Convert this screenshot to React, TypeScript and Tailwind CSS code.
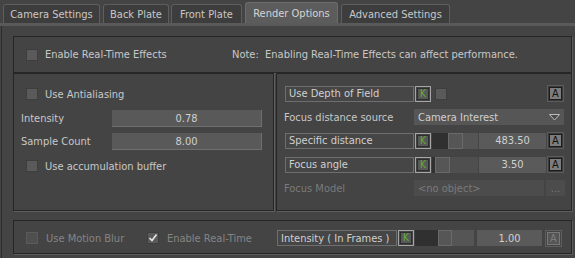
import React from 'react';

const TABS = [
  { label: 'Camera Settings', w: 'w-[97px]', ml: 'ml-[3px]' },
  { label: 'Back Plate', w: 'w-[66px]', ml: 'ml-[3px]' },
  { label: 'Front Plate', w: 'w-[71px]', ml: 'ml-[2px]' },
  { label: 'Render Options', w: 'w-[93px]', ml: 'ml-[3px]', active: true },
  { label: 'Advanced Settings', w: 'w-[109px]', ml: 'ml-[3px]' },
];

function Check({ checked = false, disabled = false }: { checked?: boolean; disabled?: boolean }) {
  return (
    <div
      className={`w-[12px] h-[12px] shrink-0 flex items-center justify-center border ${
        disabled ? 'bg-[#4f4f4f] border-[#5a5a5a]' : 'bg-[#5a5a5a] border-[#3e3e3e]'
      }`}
    >
      {checked && (
        <svg width="10" height="10" viewBox="0 0 10 10">
          <polyline points="1.5,5 4,7.5 8.5,1.5" fill="none" stroke="#e8e8e8" strokeWidth="1.6" />
        </svg>
      )}
    </div>
  );
}

function KeyBtn() {
  return (
    <div className="w-[16px] h-[16px] shrink-0 border border-[#a6a6a6] p-[1px]">
      <div className="w-full h-full bg-[#595959] border border-[#2e2e2e] flex items-center justify-center text-[10px] leading-none text-[#5fae32]">
        K
      </div>
    </div>
  );
}

function AutoBtn({ disabled = false }: { disabled?: boolean }) {
  return (
    <div
      className={`w-[17px] h-[17px] shrink-0 border p-[1px] ${
        disabled ? 'border-[#5e5e5e]' : 'border-[#5c5c5c] bg-[#3a3a3a]'
      }`}
    >
      <div
        className={`w-full h-full border flex items-center justify-center text-[11px] leading-none ${
          disabled
            ? 'bg-[#555] border-[#787878] text-[#7d7d7d]'
            : 'bg-[#7c7c7c] border-[#1c1c1c] text-[#111]'
        }`}
      >
        A
      </div>
    </div>
  );
}

function LabelBox({ children, w }: { children: React.ReactNode; w: string }) {
  return (
    <div className={`${w} h-[16px] shrink-0 border border-[#6e6e6e] bg-[#464646] flex items-center pl-[3px] text-[#d0d0d0]`}>
      {children}
    </div>
  );
}

function Slider({ dark, thumb, w, rest }: { dark: string; thumb: string; w: string; rest: string }) {
  return (
    <div className={`${w} h-[16px] shrink-0 flex bg-[#525252]`}>
      <div className={`${dark} h-full bg-[#303030]`} />
      <div className={`${thumb} h-full bg-[#565656] border border-[#6a6a6a]`} />
      <div className={`flex-1 h-full ${rest}`} />
    </div>
  );
}

function Value({ children, w }: { children: React.ReactNode; w: string }) {
  return (
    <div className={`${w} h-[16px] shrink-0 bg-[#5a5a5a] flex items-center justify-center text-[#d0d0d0]`}>
      {children}
    </div>
  );
}

function Field({ children }: { children: React.ReactNode }) {
  return (
    <div className="w-[150px] h-[17px] bg-[#595959] border-b border-r border-[#6f6f6f] flex items-center justify-center text-[#d0d0d0]">
      {children}
    </div>
  );
}

const box = 'border border-[#262626] shadow-[1px_1px_0_0_#5e5e5e]';

export default function App() {
  return (
    <div className="w-[575px] h-[258px] bg-[#444444] overflow-hidden whitespace-nowrap flex flex-col font-['DejaVu_Sans_Condensed','Liberation_Sans',sans-serif] text-[11px] text-[#c8c8c8] leading-none">
      {/* tab strip */}
      <div className="h-[23px] flex items-end">
        {TABS.map((t) => (
          <div
            key={t.label}
            className={`${t.w} ${t.ml} flex items-center justify-center rounded-t-[3px] border border-b-0 ${
              t.active
                ? 'h-[21px] bg-[#5c5c5c] border-[#6c6c6c] text-[#d4d4d4]'
                : 'h-[19px] bg-[#3d3d3d] border-[#5e5e5e] text-[#c8c8c8]'
            }`}
          >
            {t.label}
          </div>
        ))}
      </div>
      <div className="h-[3px] bg-[#5a5a5a]" />

      <div className="flex-1 ml-[1px] border-l border-[#2c2c2c] pl-[11px] pt-[10px]">
        {/* real-time effects */}
        <div className={`${box} w-[559px] h-[37px] flex items-center pl-[12px]`}>
          <Check />
          <span className="ml-[7px] w-[187px] shrink-0">Enable Real-Time Effects</span>
          <span className="whitespace-pre">Note:  Enabling Real-Time Effects can affect performance.</span>
        </div>

        <div className="flex gap-[2px]">
          {/* antialiasing */}
          <div className={`${box} w-[261px] h-[138px] flex flex-col pt-[14px]`}>
            <div className="flex items-center pl-[12px] h-[12px]">
              <Check />
              <span className="ml-[7px]">Use Antialiasing</span>
            </div>
            <div className="flex items-center pl-[7px] mt-[10px] h-[17px]">
              <span className="w-[91px]">Intensity</span>
              <Field>0.78</Field>
            </div>
            <div className="flex items-center pl-[7px] mt-[6px] h-[17px]">
              <span className="w-[91px]">Sample Count</span>
              <Field>8.00</Field>
            </div>
            <div className="flex items-center pl-[12px] mt-[10px] h-[12px]">
              <Check />
              <span className="ml-[7px]">Use accumulation buffer</span>
            </div>
          </div>

          {/* depth of field */}
          <div className={`${box} w-[296px] h-[138px] flex flex-col pt-[11px] pl-[8px]`}>
            <div className="flex items-center gap-[1px] h-[17px]">
              <LabelBox w="w-[129px]">Use Depth of Field</LabelBox>
              <KeyBtn />
              <div className="ml-[3px]">
                <Check />
              </div>
              <div className="flex-1" />
              <div className="mr-[7px]">
                <AutoBtn />
              </div>
            </div>
            <div className="flex items-center h-[16px] mt-[7px] -ml-[1px]">
              <span className="w-[130px]">Focus distance source</span>
              <div className="w-[150px] h-[16px] bg-[#565656] flex items-center pl-[4px] pr-[4px] text-[#d0d0d0]">
                <span className="flex-1">Camera Interest</span>
                <svg width="11" height="7" viewBox="0 0 11 7">
                  <polygon points="0.5,0.5 10.5,0.5 5.5,6" fill="#4a4a4a" stroke="#bdbdbd" strokeWidth="1" />
                </svg>
              </div>
            </div>
            <div className="flex items-center gap-[1px] h-[17px] mt-[7px]">
              <LabelBox w="w-[129px]">Specific distance</LabelBox>
              <KeyBtn />
              <Slider w="w-[46px]" dark="w-[16px]" thumb="w-[15px]" rest="bg-[#555]" />
              <Value w="w-[67px]">483.50</Value>
              <AutoBtn />
            </div>
            <div className="flex items-center gap-[1px] h-[17px] mt-[7px]">
              <LabelBox w="w-[129px]">Focus angle</LabelBox>
              <KeyBtn />
              <Slider w="w-[46px]" dark="w-[3px]" thumb="w-[15px]" rest="bg-[#4f4f4f]" />
              <Value w="w-[67px]">3.50</Value>
              <AutoBtn />
            </div>
            <div className="flex items-center h-[16px] mt-[7px] -ml-[1px] text-[#7a7a7a]">
              <span className="w-[130px]">Focus Model</span>
              <div className="w-[130px] h-[16px] bg-[#4c4c4c] flex items-center pl-[4px]">&lt;no object&gt;</div>
              <div className="w-[19px] h-[16px] ml-[2px] bg-[#4c4c4c] flex items-center justify-center">...</div>
            </div>
          </div>
        </div>

        {/* motion blur */}
        <div className={`${box} w-[559px] h-[34px] mt-[9px] flex items-center pl-[12px] pt-[2px] text-[#858585]`}>
          <Check disabled />
          <span className="ml-[8px] w-[101px] shrink-0">Use Motion Blur</span>
          <Check checked />
          <span className="ml-[8px] w-[110px] shrink-0">Enable Real-Time</span>
          <div className="flex items-center gap-[1px]">
            <LabelBox w="w-[120px]">Intensity ( In Frames )</LabelBox>
            <KeyBtn />
            <Slider w="w-[59px]" dark="w-[23px]" thumb="w-[14px]" rest="bg-[#555]" />
            <div className="ml-[2px]">
              <Value w="w-[65px]">1.00</Value>
            </div>
            <div className="ml-[2px]">
              <AutoBtn disabled />
            </div>
          </div>
        </div>
      </div>
    </div>
  );
}
